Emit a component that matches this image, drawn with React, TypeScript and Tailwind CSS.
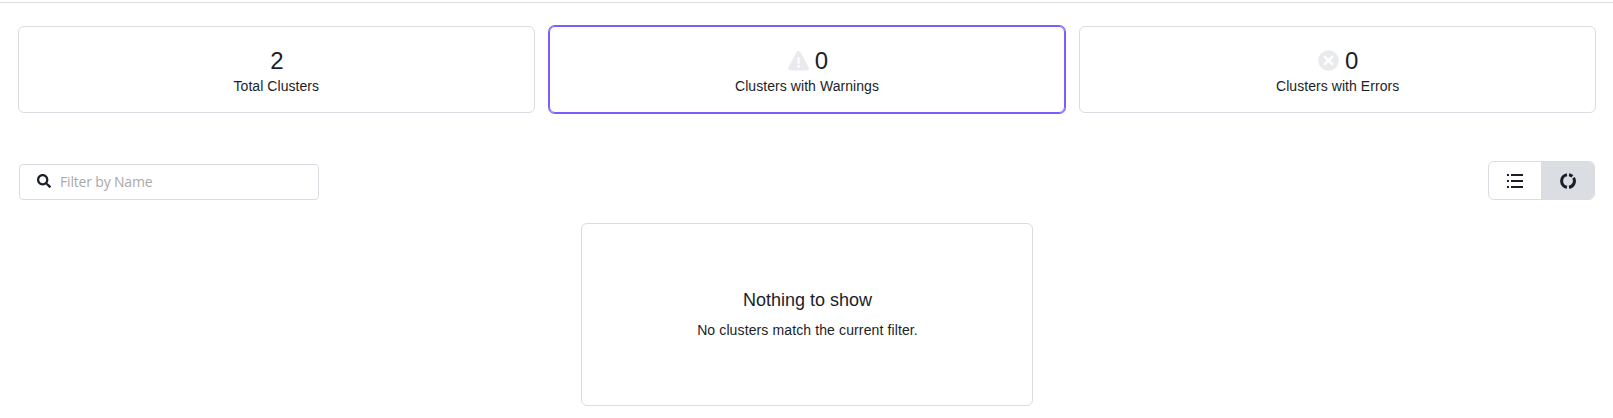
import type { ReactNode } from "react";
import { FaSearch } from "react-icons/fa";

function WarningIcon() {
  return (
    <svg className="mb-px ml-px h-5 w-[21px]" viewBox="0 0 21 20">
      <path d="M10.5 2.4 18.6 17.4H2.4Z" fill="#e8eaed" stroke="#e8eaed" strokeWidth="4.4" strokeLinejoin="round" />
      <path d="M10.5 7.2v4.6" stroke="#fff" strokeWidth="2.2" strokeLinecap="round" />
      <circle cx="10.5" cy="15.4" r="1.4" fill="#fff" />
    </svg>
  );
}

function ErrorIcon() {
  return (
    <svg className="mb-px h-[21px] w-[21px]" viewBox="0 0 21 21">
      <circle cx="10.5" cy="10.5" r="10.3" fill="#e8eaed" />
      <path d="m6.8 6.8 7.4 7.4m0-7.4-7.4 7.4" stroke="#fff" strokeWidth="2.4" strokeLinecap="round" />
    </svg>
  );
}

function StatCard({ value, label, icon, selected }: { value: number; label: string; icon?: ReactNode; selected?: boolean }) {
  return (
    <button
      className={
        selected
          ? "flex h-[87px] flex-col items-center rounded-md border border-[#7c5cfa] pt-[18px] ring-1 ring-[#7c5cfa]"
          : "flex h-[87px] flex-col items-center rounded-md border border-[#dadce2] pt-[18px]"
      }
    >
      <span className="flex h-8 items-center gap-[6px] pl-px text-2xl leading-8">
        {icon}
        {value}
      </span>
      <span className="-mt-px text-sm leading-5 tracking-[0.06px]">{label}</span>
    </button>
  );
}

export default function App() {
  return (
    <main className="h-[418px] overflow-hidden bg-white pt-[2px] font-['Liberation_Sans',Arial,sans-serif] text-[#1b1d29]">
      <div className="h-px bg-[#dadce2]" />
      <section className="mt-[23px] grid grid-cols-3 gap-[14px] pr-[17px] pl-[18px]">
        <StatCard value={2} label="Total Clusters" />
        <StatCard value={0} label="Clusters with Warnings" icon={<WarningIcon />} selected />
        <StatCard value={0} label="Clusters with Errors" icon={<ErrorIcon />} />
      </section>
      <section className="mt-[48px] flex items-start justify-between pr-[18px] pl-[19px]">
        <label className="mt-[3px] flex h-9 w-[300px] items-center rounded border border-[#dadce2] pl-[17px]">
          <FaSearch className="mb-[2px] size-[14px] shrink-0" />
          <input
            className="ml-[9px] w-[240px] font-['Open_Sans','Noto_Sans',sans-serif] text-sm tracking-[-0.18px] text-[#1b1d29] outline-none placeholder:text-[#a9a9ac]"
            placeholder="Filter by Name"
          />
        </label>
        <div className="flex h-[39px] w-[107px] overflow-hidden rounded-md border border-[#dadce2]">
          <button className="flex flex-1 items-center justify-center pt-px" aria-label="List">
            <svg className="h-4 w-4" viewBox="0 0 16 16" fill="none" stroke="#1b1d29" strokeWidth="2">
              <path d="M0 2h2M4 2h12M0 8h2M4 8h12M0 14h2M4 14h12" />
            </svg>
          </button>
          <button className="flex w-[53px] items-center justify-center bg-[#dadde1] pt-px" aria-label="Chart">
            <svg className="h-4 w-4" viewBox="0 0 16 16" fill="none" stroke="#1b1d29" strokeWidth="3">
              <path d="M7 1.68A6.4 6.4 0 0 0 7 14.32M9 14.32A6.4 6.4 0 0 0 13.55 4.8M9 1.68A6.4 6.4 0 0 1 12.36 3.32" />
            </svg>
          </button>
        </div>
      </section>
      <section className="mt-[23px] ml-[581px] flex h-[183px] w-[452px] flex-col items-center rounded-md border border-[#dcdcdf] pt-[64px] pl-px">
        <h2 className="text-lg leading-6">Nothing to show</h2>
        <p className="mt-[8px] text-sm leading-5 tracking-[0.12px]">No clusters match the current filter.</p>
      </section>
    </main>
  );
}
